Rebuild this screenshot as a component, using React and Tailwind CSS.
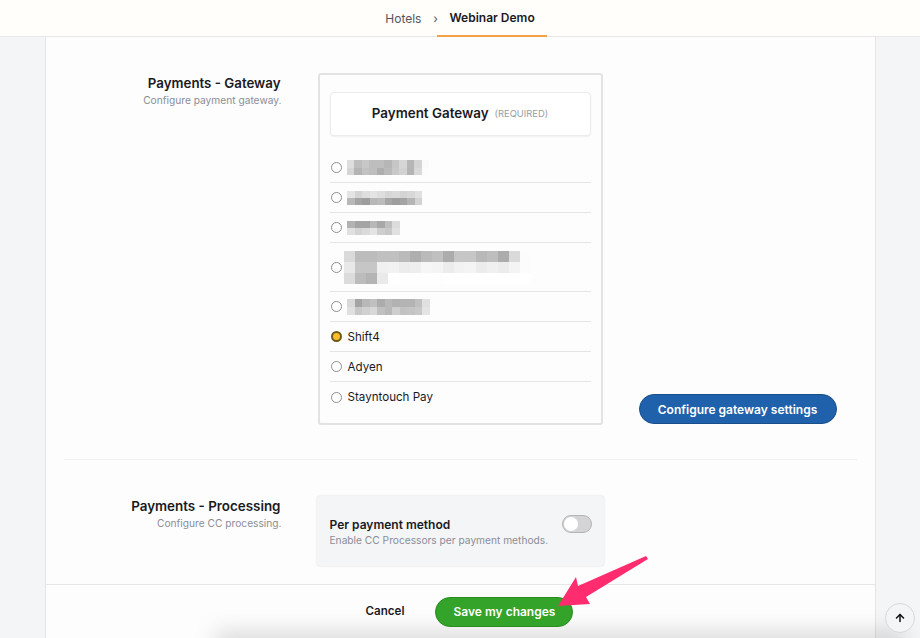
import React from 'react';
import { ArrowUp } from 'lucide-react';

// pixelated (censored) option labels, values are grey levels per cell
const blurred = [
  { w: 82, h: 15, rows: [[222, 190, 200, 190, 190, 182, 198, 214, 182, 212, 250], [214, 180, 194, 190, 174, 186, 200, 210, 180, 216, 252]] },
  { w: 75, h: 14, rows: [[228, 212, 222, 228, 222, 214, 218, 212, 216, 224], [184, 164, 158, 184, 188, 166, 158, 164, 180, 210]] },
  { w: 53, h: 14, rows: [[178, 164, 164, 184, 168, 190, 220], [224, 212, 218, 228, 206, 200, 224]] },
  {
    w: 187,
    h: 33,
    rows: [
      [218, 188, 188, 192, 192, 186, 174, 186, 192, 172, 198, 198, 184, 190, 172, 218, 252],
      [232, 198, 198, 240, 242, 236, 238, 246, 244, 236, 242, 244, 236, 240, 236, 244, 252],
      [220, 188, 180, 234, 255, 254, 254, 254, 254, 255, 255, 255, 255, 255, 255, 255, 255],
    ],
  },
  { w: 83, h: 16, rows: [[216, 164, 184, 192, 172, 184, 178, 180, 180, 192, 224], [224, 200, 208, 216, 192, 184, 206, 194, 196, 200, 228]] },
];

const Pixelated = ({ data }) => {
  const cols = data.rows[0].length;
  const cw = data.w / cols;
  const ch = data.h / data.rows.length;
  return (
    <svg width={data.w} height={data.h} className="blur-[0.4px]" shapeRendering="crispEdges">
      {data.rows.map((row, y) =>
        row.map((g, x) => (
          <rect key={x + '-' + y} x={x * cw} y={y * ch} width={cw + 0.5} height={ch + 0.5} fill={`rgb(${g},${g},${g})`} />
        ))
      )}
    </svg>
  );
};

const Radio = ({ checked }) =>
  checked ? (
    <span className="w-[11px] h-[11px] shrink-0 rounded-full border-2 border-[#6b5a1e] bg-[#fbbf24]"></span>
  ) : (
    <span className="w-[11px] h-[11px] shrink-0 rounded-full border border-[#8f8f8f] bg-white"></span>
  );

const Option = ({ children, gap = 'gap-[6px]', height = 'h-[30px]', last }) => (
  <div className={`flex items-center ${gap} ${height} pl-[1px] ${last ? '' : 'border-b border-[#e5e5e5]'}`}>{children}</div>
);

const App = () => {
  return (
    <div className="relative h-[638px] w-[920px] overflow-hidden flex flex-col bg-[#f3f5f7] text-[#1a1a1e] font-['Inter',sans-serif]">
      <header className="h-[37px] shrink-0 flex justify-center pl-[12px] bg-[#fffefb] border-b border-[#e8e8e8]">
        <div className="flex items-center h-[36px] text-[12px]">
          <span className="text-[#55555a] mr-[10px] pt-[1px]">Hotels</span>
          <span className="text-[#55555a] w-[8px] text-center pt-[1px]">›</span>
          <div className="h-[37px] flex items-center px-[12px] -ml-[2px] pt-[1px] border-b-2 border-[#f2a144] font-semibold text-[12px]">Webinar Demo</div>
        </div>
      </header>

      <main className="flex-1 pl-[45px] pr-[44px] min-h-0">
        <div className="relative h-full flex flex-col bg-[#fdfdfd] border-x-[1.5px] border-[#e4e4e4]">
          <div className="pl-[17.5px] pr-[18.5px] flex-1 min-h-0">
            <section className="flex pt-[36px] h-[423px] border-b border-[#f0f0f0]">
              <div className="w-[218px] text-right pt-[1px]">
                <h3 className="text-[13.3px] leading-[18px] font-semibold pr-[1px]">Payments - Gateway</h3>
                <p className="text-[10.2px] leading-[16px] text-[#8a8d96]">Configure payment gateway.</p>
              </div>
              <div className="ml-[36px] w-[285px] h-[352px] rounded-[3px] border-2 border-[#e3e3e3] bg-[#fdfdfd] px-[10px] pt-[17px]">
                <div className="h-[44px] flex items-center justify-center gap-[6px] rounded-[4px] border border-[#ececec] shadow-[0_1px_2px_rgba(0,0,0,0.06)] bg-white">
                  <span className="text-[13.4px] font-semibold mt-[-2px]">Payment Gateway</span>
                  <span className="text-[9.4px] text-[#9a9ca4]">(REQUIRED)</span>
                </div>
                <div className="mt-[17px] text-[11.6px]">
                  <Option gap="gap-[5px]"><Radio /><Pixelated data={blurred[0]} /></Option>
                  <Option gap="gap-[5px]"><Radio /><Pixelated data={blurred[1]} /></Option>
                  <Option gap="gap-[5px]"><Radio /><Pixelated data={blurred[2]} /></Option>
                  <Option height="h-[49px]" gap="gap-[2px]"><Radio /><Pixelated data={blurred[3]} /></Option>
                  <Option gap="gap-[5px]"><Radio /><Pixelated data={blurred[4]} /></Option>
                  <Option><Radio checked /><span className="pt-[2px]">Shift4</span></Option>
                  <Option><Radio /><span className="pt-[2px]">Adyen</span></Option>
                  <Option last><Radio /><span className="pt-[1px]">Stayntouch Pay</span></Option>
                </div>
              </div>
              <div className="ml-[36px] self-start mt-[321px]">
                <button className="h-[30px] w-[198px] pt-[1px] rounded-full bg-[#2061ab] border border-[#1b4f8c] text-white text-[12px] font-semibold">
                  Configure gateway settings
                </button>
              </div>
            </section>

            <section className="flex pt-[36px]">
              <div className="w-[218px] text-right pt-[1px]">
                <h3 className="text-[13.4px] leading-[18px] font-semibold pr-[1px]">Payments - Processing</h3>
                <p className="text-[10.2px] leading-[16px] text-[#8a8d96]">Configure CC processing.</p>
              </div>
              <div className="ml-[35px] w-[287px] h-[70px] rounded-[3px] bg-[#f4f5f7] shadow-[0_0_2px_rgba(0,0,0,0.15)] pl-[13px] pr-[12px] flex items-center justify-between">
                <div className="pt-[1px]">
                  <div className="text-[12px] leading-[16px] font-semibold">Per payment method</div>
                  <div className="text-[10.2px] leading-[14px] text-[#8a8d96]">Enable CC Processors per payment methods.</div>
                </div>
                <div className="w-[30px] h-[18px] mb-[15px] rounded-full bg-[#d4d4d6] border border-[#b5b5b8] flex items-center pl-[1px]">
                  <span className="w-[14px] h-[14px] rounded-full bg-white"></span>
                </div>
              </div>
            </section>
          </div>

          <footer className="relative h-[54px] shrink-0 border-t border-[#e6e6e6] flex justify-center gap-[31px] pt-[12px] pl-[18px]">
            <div className="absolute left-[170px] right-[-30px] bottom-[-16px] h-[22px] bg-black/15 blur-[11px]"></div>
            <button className="relative text-[11.6px] font-semibold h-[30px]">Cancel</button>
            <button className="relative w-[138px] h-[30px] rounded-full bg-[#33a329] border border-[#2b8a22] text-white text-[12px] font-semibold">
              Save my changes
            </button>
          </footer>
        </div>
      </main>

      <button className="absolute left-[885px] top-[603px] w-[30px] h-[30px] rounded-full border border-[#d8d8d8] bg-[#f4f5f6] flex items-center justify-center">
        <ArrowUp size={12} strokeWidth={3} color="#111" />
      </button>

      <svg className="absolute left-[550px] top-[550px]" width="105" height="65" viewBox="550 550 105 65">
        <polygon points="558,606 576,577 578,586 646,556 648,559 586,597 590,604" fill="#ff2d6f" />
      </svg>
    </div>
  );
};

export default App;
